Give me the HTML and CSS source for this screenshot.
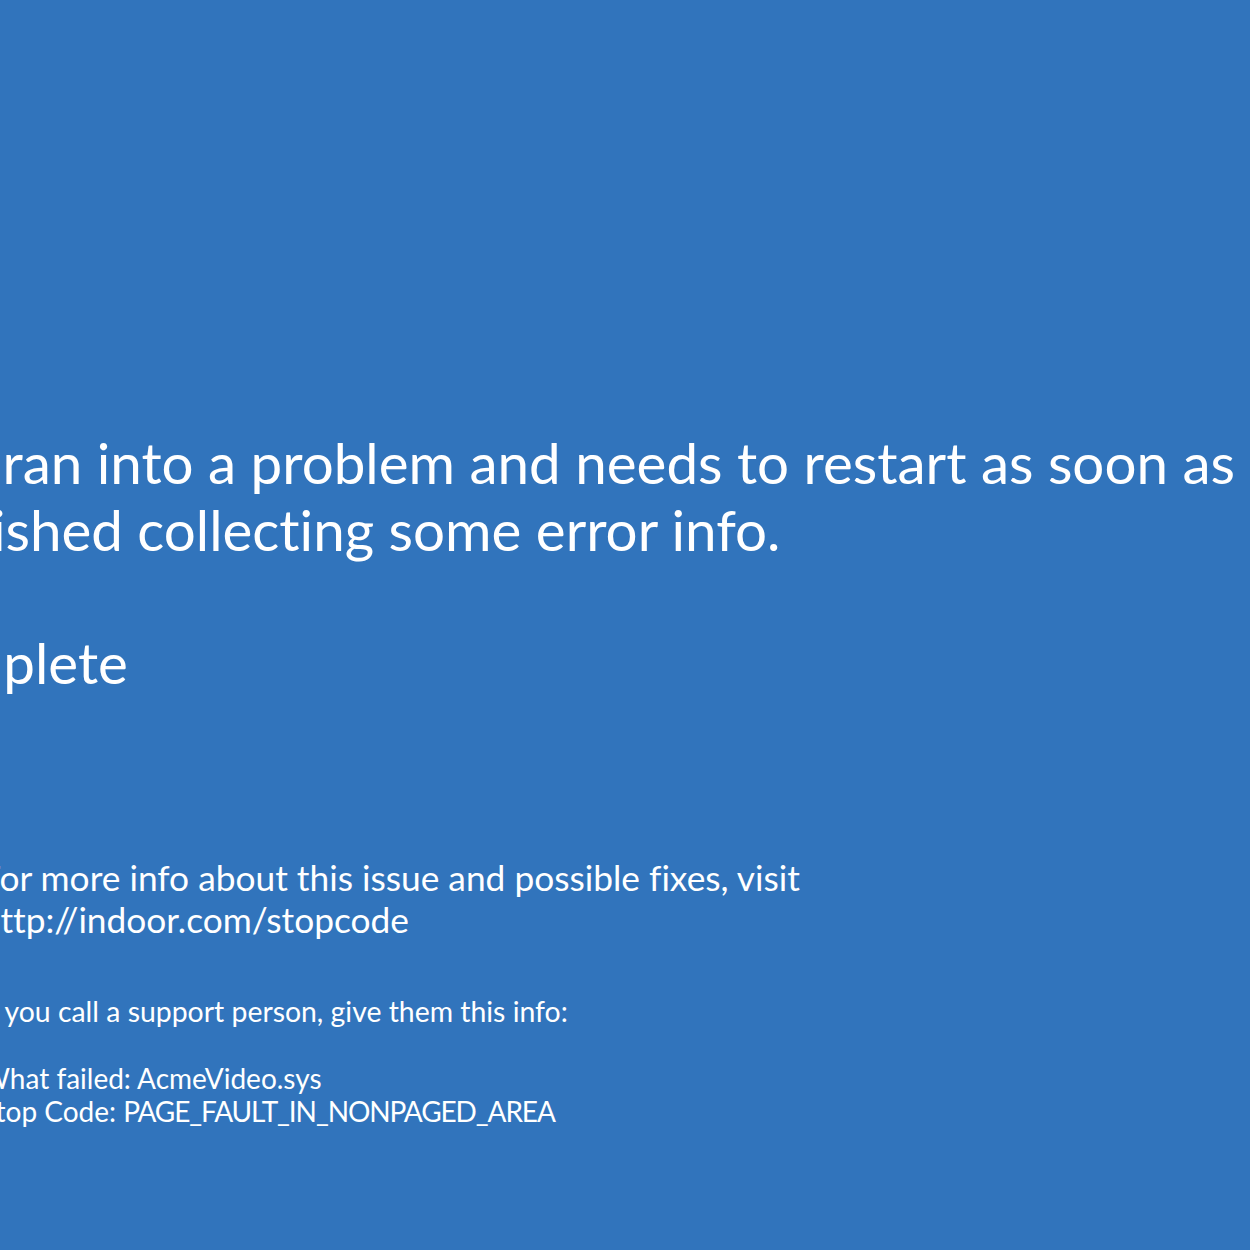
FILE: index.html
```html
<!DOCTYPE html>
<html lang="en">
<head>
<meta charset="utf-8">
<title>Stop code</title>
<link rel="stylesheet" href="styles.css">
</head>
<body>
<main class="screen">
  <p class="headline">Your VM ran into a problem and needs to restart as soon as<br>it had finished collecting some error info.</p>
  <p class="progress">10% complete</p>
  <section class="details">
    <div class="qr" aria-hidden="true"></div>
    <div class="info">
      <p class="visit">For more info about this issue and possible fixes, visit<br>http://indoor.com/stopcode</p>
      <p class="support">If you call a support person, give them this info:</p>
      <p class="codes">What failed: AcmeVideo.sys<br>Stop Code: <span class="code">PAGE_FAULT_IN_NONPAGED_AREA</span></p>
    </div>
  </section>
</main>
</body>
</html>
```
FILE: styles.css
```css
html, body {
  margin: 0;
  padding: 0;
}
body {
  background: #3174bc;
  color: #ffffff;
  font-family: "Lato", "Noto Sans", sans-serif;
  font-variant-ligatures: none;
  width: 1250px;
  height: 1250px;
  overflow: hidden;
}
p {
  margin: 0;
  white-space: nowrap;
}
.screen {
  margin-left: -227px;
  padding-top: 429px;
}
.headline,
.progress {
  font-size: 56.5px;
  line-height: 67px;
}
.progress {
  margin-top: 66px;
}
.details {
  display: flex;
  gap: 33px;
  margin-top: 161px;
}
.qr {
  width: 175px;
  height: 175px;
  flex: none;
}
.visit {
  font-size: 35.3px;
  line-height: 42px;
}
.support {
  font-size: 28.4px;
  line-height: 28px;
  margin-top: 56px;
}
.codes {
  font-size: 28px;
  line-height: 33px;
  margin-top: 37px;
}
.code {
  letter-spacing: -1.1px;
}
```
